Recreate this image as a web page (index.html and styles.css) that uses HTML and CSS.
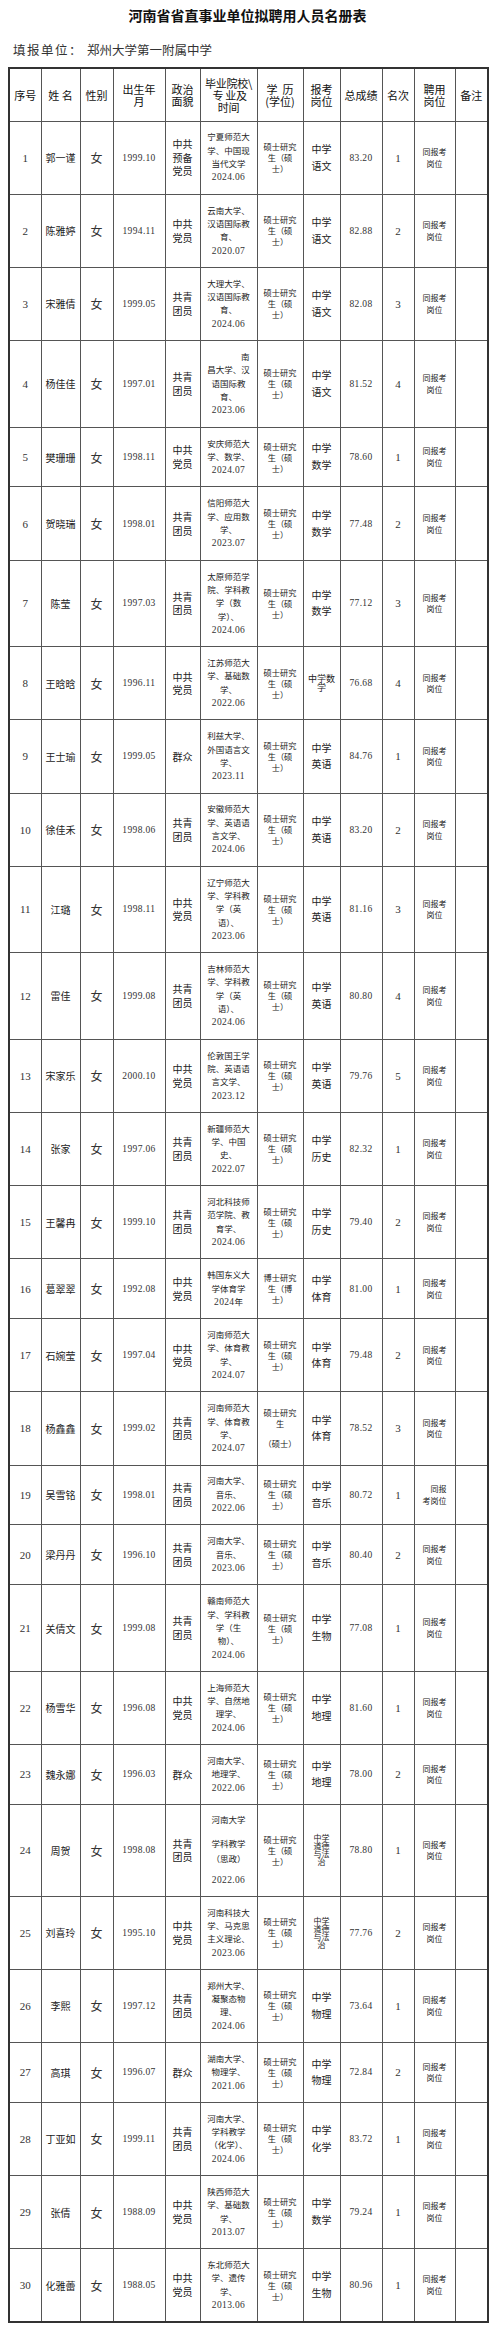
FILE: index.html
```html
<!DOCTYPE html>
<html lang="zh-CN">
<head>
<meta charset="utf-8">
<title>河南省省直事业单位拟聘用人员名册表</title>
<link rel="stylesheet" href="styles.css">
</head>
<body>
<div class="page">
<h1 class="title">河南省省直事业单位拟聘用人员名册表</h1>
<p class="unit"><span class="unit-label">填报单位：</span><span class="unit-name">郑州大学第一附属中学</span></p>
<table class="roster">
<colgroup>
<col class="w-no"><col class="w-nm"><col class="w-sx"><col class="w-dt"><col class="w-pl"><col class="w-sc"><col class="w-ed"><col class="w-ps"><col class="w-sr"><col class="w-rk"><col class="w-hr"><col class="w-nt">
</colgroup>
<thead>
<tr class="head">
<th>序号</th><th>姓 名</th><th>性别</th><th>出生年<br>月</th><th>政治<br>面貌</th><th class="th-sc">毕业院校\<br>&nbsp;专 业及<br>时间</th><th>学&nbsp;&nbsp;历<br>(学位)</th><th>报考<br>岗位</th><th>总成绩</th><th>名次</th><th>聘用<br>岗位</th><th>备注</th>
</tr>
</thead>
<tbody>
<tr class="h73"><td class="no">1</td><td class="nm">郭一谨</td><td class="sx">女</td><td class="dt">1999.10</td><td class="pl">中共<br>预备<br>党员</td><td class="sc">宁夏师范大<br>学、中国现<br>当代文学<br><span class="num">2024.06</span></td><td class="ed">硕士研究<br>生（硕<br>士）</td><td class="ps">中学<br>语文</td><td class="sr">83.20</td><td class="rk">1</td><td class="hr">同报考<br>岗位</td><td class="nt"></td></tr>
<tr class="h73"><td class="no">2</td><td class="nm">陈雅婷</td><td class="sx">女</td><td class="dt">1994.11</td><td class="pl">中共<br>党员</td><td class="sc">云南大学、<br>汉语国际教<br>育、<br><span class="num">2020.07</span></td><td class="ed">硕士研究<br>生（硕<br>士）</td><td class="ps">中学<br>语文</td><td class="sr">82.88</td><td class="rk">2</td><td class="hr">同报考<br>岗位</td><td class="nt"></td></tr>
<tr class="h73"><td class="no">3</td><td class="nm">宋雅倩</td><td class="sx">女</td><td class="dt">1999.05</td><td class="pl">共青<br>团员</td><td class="sc">大理大学、<br>汉语国际教<br>育、<br><span class="num">2024.06</span></td><td class="ed">硕士研究<br>生（硕<br>士）</td><td class="ps">中学<br>语文</td><td class="sr">82.08</td><td class="rk">3</td><td class="hr">同报考<br>岗位</td><td class="nt"></td></tr>
<tr class="h87"><td class="no">4</td><td class="nm">杨佳佳</td><td class="sx">女</td><td class="dt">1997.01</td><td class="pl">共青<br>团员</td><td class="sc"><span class="ln right">南</span>昌大学、汉<br>语国际教<br>育、<br><span class="num">2023.06</span></td><td class="ed">硕士研究<br>生（硕<br>士）</td><td class="ps">中学<br>语文</td><td class="sr">81.52</td><td class="rk">4</td><td class="hr">同报考<br>岗位</td><td class="nt"></td></tr>
<tr class="h60"><td class="no">5</td><td class="nm">樊珊珊</td><td class="sx">女</td><td class="dt">1998.11</td><td class="pl">中共<br>党员</td><td class="sc">安庆师范大<br>学、数学、<br><span class="num">2024.07</span></td><td class="ed">硕士研究<br>生（硕<br>士）</td><td class="ps">中学<br>数学</td><td class="sr">78.60</td><td class="rk">1</td><td class="hr">同报考<br>岗位</td><td class="nt"></td></tr>
<tr class="h73"><td class="no">6</td><td class="nm">贺晓瑞</td><td class="sx">女</td><td class="dt">1998.01</td><td class="pl">共青<br>团员</td><td class="sc">信阳师范大<br>学、应用数<br>学、<br><span class="num">2023.07</span></td><td class="ed">硕士研究<br>生（硕<br>士）</td><td class="ps">中学<br>数学</td><td class="sr">77.48</td><td class="rk">2</td><td class="hr">同报考<br>岗位</td><td class="nt"></td></tr>
<tr class="h87"><td class="no">7</td><td class="nm">陈莹</td><td class="sx">女</td><td class="dt">1997.03</td><td class="pl">共青<br>团员</td><td class="sc">太原师范学<br>院、学科教<br>学（数<br>学）、<br><span class="num">2024.06</span></td><td class="ed">硕士研究<br>生（硕<br>士）</td><td class="ps">中学<br>数学</td><td class="sr">77.12</td><td class="rk">3</td><td class="hr">同报考<br>岗位</td><td class="nt"></td></tr>
<tr class="h73"><td class="no">8</td><td class="nm">王晗晗</td><td class="sx">女</td><td class="dt">1996.11</td><td class="pl">中共<br>党员</td><td class="sc">江苏师范大<br>学、基础数<br>学、<br><span class="num">2022.06</span></td><td class="ed">硕士研究<br>生（硕<br>士）</td><td class="ps squeeze">中学数<br>学</td><td class="sr">76.68</td><td class="rk">4</td><td class="hr">同报考<br>岗位</td><td class="nt"></td></tr>
<tr class="h73"><td class="no">9</td><td class="nm">王士瑜</td><td class="sx">女</td><td class="dt">1999.05</td><td class="pl">群众</td><td class="sc">利兹大学、<br>外国语言文<br>学、<br><span class="num">2023.11</span></td><td class="ed">硕士研究<br>生（硕<br>士）</td><td class="ps">中学<br>英语</td><td class="sr">84.76</td><td class="rk">1</td><td class="hr">同报考<br>岗位</td><td class="nt"></td></tr>
<tr class="h73"><td class="no">10</td><td class="nm">徐佳禾</td><td class="sx">女</td><td class="dt">1998.06</td><td class="pl">共青<br>团员</td><td class="sc">安徽师范大<br>学、英语语<br>言文学、<br><span class="num">2024.06</span></td><td class="ed">硕士研究<br>生（硕<br>士）</td><td class="ps">中学<br>英语</td><td class="sr">83.20</td><td class="rk">2</td><td class="hr">同报考<br>岗位</td><td class="nt"></td></tr>
<tr class="h87"><td class="no">11</td><td class="nm">江璐</td><td class="sx">女</td><td class="dt">1998.11</td><td class="pl">中共<br>党员</td><td class="sc">辽宁师范大<br>学、学科教<br>学（英<br>语）、<br><span class="num">2023.06</span></td><td class="ed">硕士研究<br>生（硕<br>士）</td><td class="ps">中学<br>英语</td><td class="sr">81.16</td><td class="rk">3</td><td class="hr">同报考<br>岗位</td><td class="nt"></td></tr>
<tr class="h87"><td class="no">12</td><td class="nm">雷佳</td><td class="sx">女</td><td class="dt">1999.08</td><td class="pl">共青<br>团员</td><td class="sc">吉林师范大<br>学、学科教<br>学（英<br>语）、<br><span class="num">2024.06</span></td><td class="ed">硕士研究<br>生（硕<br>士）</td><td class="ps">中学<br>英语</td><td class="sr">80.80</td><td class="rk">4</td><td class="hr">同报考<br>岗位</td><td class="nt"></td></tr>
<tr class="h73"><td class="no">13</td><td class="nm">宋家乐</td><td class="sx">女</td><td class="dt">2000.10</td><td class="pl">中共<br>党员</td><td class="sc">伦敦国王学<br>院、英语语<br>言文学、<br><span class="num">2023.12</span></td><td class="ed">硕士研究<br>生（硕<br>士）</td><td class="ps">中学<br>英语</td><td class="sr">79.76</td><td class="rk">5</td><td class="hr">同报考<br>岗位</td><td class="nt"></td></tr>
<tr class="h73"><td class="no">14</td><td class="nm">张家</td><td class="sx">女</td><td class="dt">1997.06</td><td class="pl">共青<br>团员</td><td class="sc">新疆师范大<br>学、中国<br>史、<br><span class="num">2022.07</span></td><td class="ed">硕士研究<br>生（硕<br>士）</td><td class="ps">中学<br>历史</td><td class="sr">82.32</td><td class="rk">1</td><td class="hr">同报考<br>岗位</td><td class="nt"></td></tr>
<tr class="h73"><td class="no">15</td><td class="nm">王馨冉</td><td class="sx">女</td><td class="dt">1999.10</td><td class="pl">共青<br>团员</td><td class="sc">河北科技师<br>范学院、教<br>育学、<br><span class="num">2024.06</span></td><td class="ed">硕士研究<br>生（硕<br>士）</td><td class="ps">中学<br>历史</td><td class="sr">79.40</td><td class="rk">2</td><td class="hr">同报考<br>岗位</td><td class="nt"></td></tr>
<tr class="h60"><td class="no">16</td><td class="nm">葛翠翠</td><td class="sx">女</td><td class="dt">1992.08</td><td class="pl">中共<br>党员</td><td class="sc">韩国东义大<br>学体育学<br><span class="num">2024</span>年</td><td class="ed">博士研究<br>生（博<br>士）</td><td class="ps">中学<br>体育</td><td class="sr">81.00</td><td class="rk">1</td><td class="hr">同报考<br>岗位</td><td class="nt"></td></tr>
<tr class="h73"><td class="no">17</td><td class="nm">石婉莹</td><td class="sx">女</td><td class="dt">1997.04</td><td class="pl">中共<br>党员</td><td class="sc">河南师范大<br>学、体育教<br>学、<br><span class="num">2024.07</span></td><td class="ed">硕士研究<br>生（硕<br>士）</td><td class="ps">中学<br>体育</td><td class="sr">79.48</td><td class="rk">2</td><td class="hr">同报考<br>岗位</td><td class="nt"></td></tr>
<tr class="h73"><td class="no">18</td><td class="nm">杨鑫鑫</td><td class="sx">女</td><td class="dt">1999.02</td><td class="pl">共青<br>团员</td><td class="sc">河南师范大<br>学、体育教<br>学、<br><span class="num">2024.07</span></td><td class="ed"><span class="ln">硕士研究</span><span class="ln">生</span><span class="ln gap9">（硕士）</span></td><td class="ps">中学<br>体育</td><td class="sr">78.52</td><td class="rk">3</td><td class="hr">同报考<br>岗位</td><td class="nt"></td></tr>
<tr class="h60"><td class="no">19</td><td class="nm">吴雪铭</td><td class="sx">女</td><td class="dt">1998.01</td><td class="pl">共青<br>团员</td><td class="sc">河南大学、<br>音乐、<br><span class="num">2022.06</span></td><td class="ed">硕士研究<br>生（硕<br>士）</td><td class="ps">中学<br>音乐</td><td class="sr">80.72</td><td class="rk">1</td><td class="hr">　同报<br>考岗位</td><td class="nt"></td></tr>
<tr class="h60"><td class="no">20</td><td class="nm">梁丹丹</td><td class="sx">女</td><td class="dt">1996.10</td><td class="pl">共青<br>团员</td><td class="sc">河南大学、<br>音乐、<br><span class="num">2023.06</span></td><td class="ed">硕士研究<br>生（硕<br>士）</td><td class="ps">中学<br>音乐</td><td class="sr">80.40</td><td class="rk">2</td><td class="hr">同报考<br>岗位</td><td class="nt"></td></tr>
<tr class="h87"><td class="no">21</td><td class="nm">关倩文</td><td class="sx">女</td><td class="dt">1999.08</td><td class="pl">共青<br>团员</td><td class="sc">赣南师范大<br>学、学科教<br>学（生<br>物）、<br><span class="num">2024.06</span></td><td class="ed">硕士研究<br>生（硕<br>士）</td><td class="ps">中学<br>生物</td><td class="sr">77.08</td><td class="rk">1</td><td class="hr">同报考<br>岗位</td><td class="nt"></td></tr>
<tr class="h73"><td class="no">22</td><td class="nm">杨雪华</td><td class="sx">女</td><td class="dt">1996.08</td><td class="pl">中共<br>党员</td><td class="sc">上海师范大<br>学、自然地<br>理学、<br><span class="num">2024.06</span></td><td class="ed">硕士研究<br>生（硕<br>士）</td><td class="ps">中学<br>地理</td><td class="sr">81.60</td><td class="rk">1</td><td class="hr">同报考<br>岗位</td><td class="nt"></td></tr>
<tr class="h60"><td class="no">23</td><td class="nm">魏永娜</td><td class="sx">女</td><td class="dt">1996.03</td><td class="pl">群众</td><td class="sc">河南大学、<br>地理学、<br><span class="num">2022.06</span></td><td class="ed">硕士研究<br>生（硕<br>士）</td><td class="ps">中学<br>地理</td><td class="sr">78.00</td><td class="rk">2</td><td class="hr">同报考<br>岗位</td><td class="nt"></td></tr>
<tr class="h92"><td class="no">24</td><td class="nm">周贺</td><td class="sx">女</td><td class="dt">1998.08</td><td class="pl">共青<br>团员</td><td class="sc"><span class="ln">河南大学</span><span class="ln gap10">学科教学</span><span class="ln gap2">（思政）</span><span class="ln gap8 num">2022.06</span></td><td class="ed">硕士研究<br>生（硕<br>士）</td><td class="ps cram">中学<br>道德<br>与法<br>治</td><td class="sr">78.80</td><td class="rk">1</td><td class="hr">同报考<br>岗位</td><td class="nt"></td></tr>
<tr class="h73"><td class="no">25</td><td class="nm">刘喜玲</td><td class="sx">女</td><td class="dt">1995.10</td><td class="pl">中共<br>党员</td><td class="sc">河南科技大<br>学、马克思<br>主义理论、<br><span class="num">2023.06</span></td><td class="ed">硕士研究<br>生（硕<br>士）</td><td class="ps cram">中学<br>道德<br>与法<br>治</td><td class="sr">77.76</td><td class="rk">2</td><td class="hr">同报考<br>岗位</td><td class="nt"></td></tr>
<tr class="h73"><td class="no">26</td><td class="nm">李熙</td><td class="sx">女</td><td class="dt">1997.12</td><td class="pl">共青<br>团员</td><td class="sc">郑州大学、<br>凝聚态物<br>理、<br><span class="num">2024.06</span></td><td class="ed">硕士研究<br>生（硕<br>士）</td><td class="ps">中学<br>物理</td><td class="sr">73.64</td><td class="rk">1</td><td class="hr">同报考<br>岗位</td><td class="nt"></td></tr>
<tr class="h60"><td class="no">27</td><td class="nm">高琪</td><td class="sx">女</td><td class="dt">1996.07</td><td class="pl">群众</td><td class="sc">湖南大学、<br>物理学、<br><span class="num">2021.06</span></td><td class="ed">硕士研究<br>生（硕<br>士）</td><td class="ps">中学<br>物理</td><td class="sr">72.84</td><td class="rk">2</td><td class="hr">同报考<br>岗位</td><td class="nt"></td></tr>
<tr class="h73"><td class="no">28</td><td class="nm">丁亚如</td><td class="sx">女</td><td class="dt">1999.11</td><td class="pl">共青<br>团员</td><td class="sc">河南大学、<br>学科教学<br>（化学）、<br><span class="num">2024.06</span></td><td class="ed">硕士研究<br>生（硕<br>士）</td><td class="ps">中学<br>化学</td><td class="sr">83.72</td><td class="rk">1</td><td class="hr">同报考<br>岗位</td><td class="nt"></td></tr>
<tr class="h73"><td class="no">29</td><td class="nm">张倩</td><td class="sx">女</td><td class="dt">1988.09</td><td class="pl">中共<br>党员</td><td class="sc">陕西师范大<br>学、基础数<br>学、<br><span class="num">2013.07</span></td><td class="ed">硕士研究<br>生（硕<br>士）</td><td class="ps">中学<br>数学</td><td class="sr">79.24</td><td class="rk">1</td><td class="hr">同报考<br>岗位</td><td class="nt"></td></tr>
<tr class="h73"><td class="no">30</td><td class="nm">化雅蕾</td><td class="sx">女</td><td class="dt">1988.05</td><td class="pl">中共<br>党员</td><td class="sc">东北师范大<br>学、遗传<br>学、<br><span class="num">2013.06</span></td><td class="ed raised">硕士研究<br>生（硕<br>士）</td><td class="ps">中学<br>生物</td><td class="sr">80.96</td><td class="rk">1</td><td class="hr">同报考<br>岗位</td><td class="nt"></td></tr>
</tbody>
</table>
</div>
</body>
</html>
```

FILE: styles.css
```css
html, body {
  margin: 0;
  padding: 0;
  background: #ffffff;
}

body {
  font-family: "Noto Sans CJK SC", sans-serif;
  color: #222222;
}

.page {
  width: 479px;
  margin-left: 8px;
}

.title {
  margin: 0;
  padding-top: 5px;
  height: 20px;
  line-height: 20px;
  font-size: 14px;
  font-weight: bold;
  text-align: center;
  color: #111111;
}

.unit {
  margin: 17px 0 0 5px;
  height: 16px;
  line-height: 16px;
  font-size: 12.5px;
  color: #333333;
  white-space: nowrap;
}

.unit-label {
  letter-spacing: 1.5px;
  margin-right: 4px;
}

.roster {
  margin-top: 9px;
  width: 479px;
  table-layout: fixed;
  border-collapse: collapse;
  border: 2px solid #333333;
}

.w-no { width: 32px; }
.w-nm { width: 39px; }
.w-sx { width: 33px; }
.w-dt { width: 52px; }
.w-pl { width: 35px; }
.w-sc { width: 57px; }
.w-ed { width: 46px; }
.w-ps { width: 37px; }
.w-sr { width: 42px; }
.w-rk { width: 32px; }
.w-hr { width: 41px; }
.w-nt { width: 33px; }

.roster th,
.roster td {
  border: 1px solid #555555;
  padding: 0;
  text-align: center;
  vertical-align: middle;
  white-space: nowrap;
  overflow: hidden;
}

.head {
  height: 53px;
}

.roster th {
  font-weight: normal;
  font-size: 11px;
  line-height: 12px;
  color: #111111;
}

.th-sc {
  letter-spacing: -0.3px;
}

.h60 { height: 59.9px; }
.h73 { height: 73.2px; }
.h87 { height: 86.5px; }
.h92 { height: 91.7px; }

.no {
  font-family: "Liberation Serif", serif;
  font-size: 11px;
  color: #333333;
}

.nm {
  font-size: 10px;
  color: #222222;
}

.sx {
  font-size: 12px;
  color: #333333;
}

.dt,
.sr {
  font-family: "Liberation Serif", serif;
  font-size: 9.5px;
  letter-spacing: 0.35px;
  color: #333333;
}

.pl {
  font-size: 10px;
  line-height: 13.7px;
}

.sc {
  font-size: 8.5px;
  line-height: 13.33px;
}

.num {
  font-family: "Liberation Serif", serif;
  font-size: 9.5px;
  letter-spacing: 0.35px;
  color: #333333;
}

.ln {
  display: block;
}

.right {
  text-align: right;
  padding-right: 7px;
}

.gap2 { margin-top: 2.4px; }
.gap8 { margin-top: 8.4px; }
.gap9 { margin-top: 9px; }
.gap10 { margin-top: 10px; }

.ed {
  font-size: 8.2px;
  line-height: 11px;
}

.raised {
  padding-bottom: 20px;
}

.ps {
  font-size: 10px;
  line-height: 16.7px;
}

.squeeze {
  font-size: 9px;
  line-height: 9px;
}

.cram {
  font-size: 8px;
  line-height: 8px;
}

.rk {
  font-family: "Liberation Serif", serif;
  font-size: 11px;
  color: #333333;
}

.hr {
  font-size: 8px;
  line-height: 11.7px;
}
```
